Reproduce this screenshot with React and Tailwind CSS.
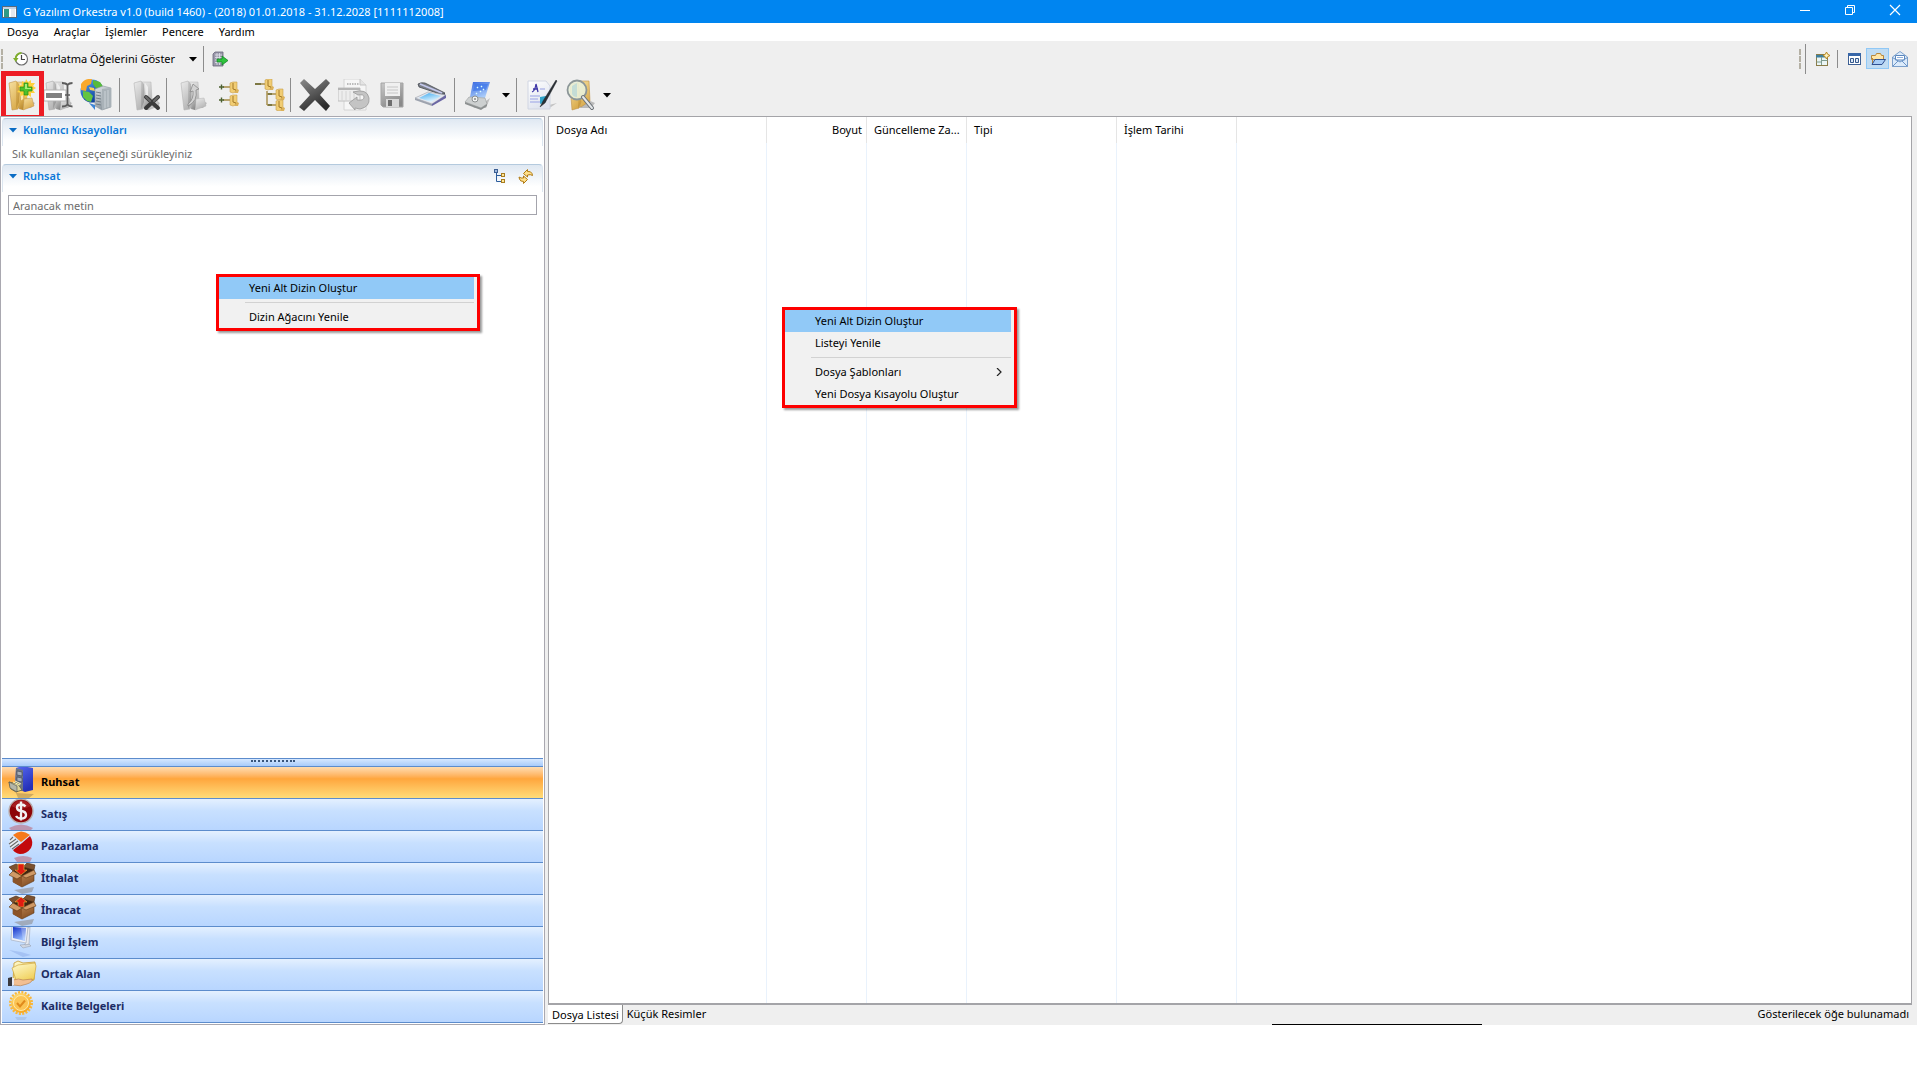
import React from "react";

/* ---------- shared gradients ---------- */
function Gradients() {
  const list = [
    ["gFolder", "#f7e0a0", "#d9ab4c"],
    ["gFolderDark", "#e3b95c", "#b98a30"],
    ["gGray", "#ececec", "#b4b4b4"],
    ["gGrayDark", "#c9c9c9", "#8a8a8a"],
    ["gX", "#8c8c8c", "#2c2c2c"],
    ["gBlue", "#5aa8f0", "#0c3f9c"],
    ["gBlueBox", "#5a6cf4", "#2430b8"],
    ["gServer", "#dfe4e8", "#8b959d"],
    ["gGlass", "#3fa9ee", "#e4f6ff"],
    ["gLaptop", "#3868e0", "#a9ccfa"],
    ["gYellow", "#fffbd0", "#f0cf58"],
    ["gSeal", "#ffe07a", "#f7a823"],
    ["gScreen", "#1430c8", "#9cc0ff"],
    ["gBox", "#d9a06a", "#8a5428"],
    ["gPaper", "#ffffff", "#dfe3ee"],
  ];
  return (
    <svg className="absolute size-0" aria-hidden="true">
      <defs>
        {list.map(([id, a, b]) => (
          <linearGradient key={id} id={id} x1="0" y1="0" x2="0.5" y2="1">
            <stop offset="0" stopColor={a} />
            <stop offset="1" stopColor={b} />
          </linearGradient>
        ))}
      </defs>
    </svg>
  );
}

const Svg = ({ s = 32, children, className = "size-8" }) => (
  <svg viewBox={`0 0 ${s} ${s}`} className={`${className} shrink-0`} fill="none" aria-hidden="true">
    {children}
  </svg>
);

const FolderShape = ({ light, dark, edge, flap = "#fff3c8" }) => (
  <>
    <path d="M22 21l6 3-4 5H10z" fill="#000" opacity=".22" />
    <path d="M10 3h9l1 18-8 7-4-3z" fill={light} stroke={edge} strokeWidth=".5" />
    <path d="M2 4l7-2 2 3 3 17-3 8-6 1z" fill={light} stroke={edge} strokeWidth=".6" />
    <path d="M9 2l3 3v18l-3 7z" fill={dark} opacity=".75" />
    <path d="M13 4l3 4v12l-2 2z" fill={flap} opacity=".8" />
    <path d="M17 20l8-1 2 8-11 4z" fill={light} stroke={edge} strokeWidth=".5" />
    <path d="M13 22l4-2-1 11-4-1z" fill={dark} />
  </>
);

/* ---------- main toolbar icons ---------- */
const NewFolderIcon = () => (
  <Svg>
    <FolderShape light="url(#gFolder)" dark="url(#gFolderDark)" edge="#c0924a" />
    <path d="M19 0l2 3 3-2 0 3 4 0-2 3 3 2-3 2 2 3-4 0 0 4-3-2-2 3-2-3-4 1 1-3-4-1 3-3-2-3 4-1 0-4 3 2z" fill="#ffd23c" />
    <path d="M17 4h4v4h4v4h-4v4h-4v-4h-4V8h4z" fill="#4fc02c" stroke="#2a8a14" strokeWidth=".7" />
    <path d="M18 5h2v4h4v1h-6z" fill="#a8ee7c" />
  </Svg>
);
const RenameIcon = () => (
  <Svg>
    <FolderShape light="url(#gGray)" dark="url(#gGrayDark)" edge="#a8a8a8" flap="#f4f4f4" />
    <rect x="0" y="11" width="22" height="11" fill="#fff" stroke="#b4b4b4" />
    <rect x="2" y="14" width="16" height="5" fill="#808080" />
    <path d="M18 4q4 0 5.500 2 1.500-2 5-2M23.500 6v20M18 27.500q4 0 5.500-2 1.500 2 5 2" stroke="#5c5c5c" strokeWidth="1.800" />
    <path d="M21 16h5" stroke="#5c5c5c" strokeWidth="1.500" />
  </Svg>
);
const GlobeServerIcon = () => (
  <Svg>
    <circle cx="12" cy="12" r="11.500" fill="url(#gBlue)" />
    <path d="M1 5Q5-1 12 0l-1 5-4 2-1 5-5-1z" fill="#f9a92c" />
    <path d="M13 1l7 2 4 6-5 2-4-3-2-3z" fill="#58bb3a" />
    <path d="M3 12l6 1 4 4-2 6-4-1-4-4z" fill="#63c442" />
    <path d="M9 8l5 1 1 3-5-1z" fill="#fbd154" />
    <path d="M15 10l8-3 8 2v19l-9 3-7-4z" fill="url(#gServer)" stroke="#8c979f" strokeWidth=".6" />
    <path d="M22 10l9-1v19l-9 3z" fill="#a9b2b8" />
    <path d="M16 13l5 1M16 16l5 1M16 19l5 1M16 22l5 1M16 25l5 1" stroke="#6b7880" strokeWidth=".9" />
    <path d="M25 12v17M28 11v17" stroke="#d4dbdf" strokeWidth=".8" />
    <path d="M9 24l6 2v5z" fill="#3d86d6" />
  </Svg>
);
const DeleteFolderIcon = () => (
  <Svg>
    <FolderShape light="url(#gGray)" dark="url(#gGrayDark)" edge="#b4b4b4" flap="#f4f4f4" />
    <path d="M14 18l12 11M26 18L14 29" stroke="#3a3a3a" strokeWidth="4" strokeLinecap="round" />
    <path d="M14 18l4 4M26 18l-4 4" stroke="#6a6a6a" strokeWidth="2" strokeLinecap="round" />
  </Svg>
);
const RestoreFolderIcon = () => (
  <Svg>
    <FolderShape light="url(#gGray)" dark="url(#gGrayDark)" edge="#b4b4b4" flap="#f4f4f4" />
    <path d="M9 27q10-5 8-16l3-1-6-5-3 8 3-1q1 8-5 13z" fill="#d2d2d2" stroke="#8a8a8a" strokeWidth=".8" />
  </Svg>
);
const MiniFolder = ({ x, y }) => (
  <g transform={`translate(${x} ${y})`}>
    <path d="M0 1l3-1h4v9l-4 2-3-1z" fill="#f1cd74" stroke="#c89d4a" strokeWidth=".6" />
    <path d="M3 1v6l3 1v2" stroke="#9a7120" strokeWidth=".9" />
    <path d="M7 7l2 1-1 3H4z" fill="#dcb25a" />
  </g>
);
const ExpandAllIcon = () => (
  <Svg>
    <path d="M4 8h7M4 21h7" stroke="#a58c48" strokeWidth="1.600" />
    <path d="M0 8h5M2.500 5.500v5M0 21h5M2.500 18.500v5" stroke="#4c6030" strokeWidth="1.400" />
    <MiniFolder x={11} y={3} />
    <MiniFolder x={11} y={16} />
  </Svg>
);
const CollapseTreeIcon = () => (
  <Svg>
    <path d="M1 5h10M13 12v14M13 15h9M13 26h9" stroke="#a58c48" strokeWidth="1.400" />
    <path d="M1 5h6M14 15h4M14 26h4" stroke="#6b6a34" strokeWidth="1.600" />
    <MiniFolder x={11} y={0} />
    <MiniFolder x={22} y={10} />
    <MiniFolder x={22} y={21} />
  </Svg>
);
const BigXIcon = () => (
  <Svg>
    <path d="M1 4l4-4 11 10L27 0l4 4-10 12 10 11-4 5-11-11L5 32l-5-4 11-12z" fill="url(#gX)" />
  </Svg>
);
const RevertDocIcon = () => (
  <Svg>
    <path d="M6 0h16l6 6v25H6z" fill="#f6f6f6" stroke="#d4d4d4" />
    <path d="M22 0v6h6" stroke="#c4c4c4" fill="#e4e4e4" />
    <path d="M9 5h12" stroke="#a8a8a8" strokeDasharray="1.500 1" strokeWidth="1.500" />
    <path d="M0 9h22v13H0z" fill="#ededed" stroke="#c0c0c0" />
    <path d="M0 9h22v2H0z" fill="#b4b4b4" />
    <path d="M4 12v10M8 12v10M12 12v10M16 12v10" stroke="#d4d4d4" />
    <path d="M15 13q14-4 16 6 1 9-9 11l-5-1v2l-6-7 8-6v3q7 1 7-3 0-3-6-2z" fill="#c4c4c4" stroke="#989898" strokeWidth=".8" />
  </Svg>
);
const SaveIcon = () => (
  <Svg>
    <path d="M5 4h22v24H7l-2-2z" fill="url(#gGrayDark)" stroke="#a4a4a4" />
    <path d="M9 4h15v13H9z" fill="#f0f0f0" />
    <path d="M11 8h11M11 11h11M11 14h11" stroke="#c6c6c6" />
    <path d="M10 20h13v8H10z" fill="#d8d8d8" />
    <path d="M12 21h4v6h-4z" fill="#6e6e6e" />
  </Svg>
);
const ScannerIcon = () => (
  <Svg>
    <path d="M3 5q3-2 7-1l20 10-2 2L4 8z" fill="#7c8088" stroke="#3a3e46" strokeWidth=".7" />
    <path d="M5 5l22 9" stroke="#c4c8ee" strokeWidth="1.600" />
    <path d="M26 15l4-1v4z" fill="#4a4e58" />
    <path d="M0 19l13-6 18 3-14 9z" fill="#e4e7ee" stroke="#9aa0aa" strokeWidth=".6" />
    <path d="M4 19l10-5 12 3-10 6z" fill="url(#gGlass)" />
    <path d="M0 19l17 6v2L0 21z" fill="#9da3ae" />
    <path d="M17 25l14-9v3l-14 8z" fill="#6a66a4" />
  </Svg>
);
const NotebookIcon = () => (
  <Svg>
    <path d="M23 22l4-3-4 10H10z" fill="#000" opacity=".2" />
    <path d="M10 3h17l-5 16-15-1z" fill="url(#gLaptop)" />
    <path d="M12 5h13l-2 6-13 1z" fill="#3f78ea" opacity=".7" />
    <path d="M14 8l1 1M18 7l1 1M17 12l1 1M20 10l1 1M13 14l1 1" stroke="#dff" strokeWidth="1.400" />
    <path d="M6 18l16 1 2 6-6 4-16-6z" fill="#cdd0d0" stroke="#989c9c" strokeWidth=".6" />
    <path d="M2 23l16 6 6-4v2l-6 4-16-6z" fill="#8c9090" />
    <circle cx="12" cy="20" r="3" fill="#f0f2f2" stroke="#8c9090" />
    <circle cx="12" cy="20" r="1" fill="#888" />
  </Svg>
);
const SignIcon = () => (
  <Svg>
    <path d="M18 27l12-3-9 6H9z" fill="#000" opacity=".18" />
    <path d="M1 2h18l4 5v23H1z" fill="url(#gPaper)" stroke="#d0d5e2" />
    <path d="M5 13q3-1 4-8l2 8M6 10h5" stroke="#4038a8" strokeWidth="1.300" />
    <path d="M13 10h5M3 17h10M3 20h8M3 23h10" stroke="#b4baea" strokeWidth="1.400" />
    <path d="M13 18l6-1v6l-6 2z" fill="#2fa2c8" />
    <path d="M29 1L16 22l-3 6 5-4L30 2z" fill="#2b3036" stroke="#14181c" strokeWidth=".4" />
  </Svg>
);
const FindFolderIcon = () => (
  <Svg>
    <path d="M22 21l7 3-4 5H12z" fill="#000" opacity=".22" />
    <path d="M12 2h11l1 20-9 6-4-3z" fill="url(#gFolder)" stroke="#c0924a" strokeWidth=".6" />
    <path d="M4 5l8-1 3 19-2 6-7 2z" fill="url(#gFolder)" stroke="#c0924a" strokeWidth=".6" />
    <path d="M12 18l3 4-3 8z" fill="url(#gFolderDark)" />
    <circle cx="11" cy="11" r="9.500" fill="#e9f1dc" fillOpacity=".88" stroke="#8c9698" strokeWidth="1.800" />
    <path d="M11 4v14q-4 0-5-3V7z" fill="#b4d6d8" opacity=".7" />
    <path d="M17 18l9 11" stroke="#6a7076" strokeWidth="4" strokeLinecap="round" />
    <path d="M17 18l9 11" stroke="#e4e7e9" strokeWidth="2" strokeLinecap="round" />
  </Svg>
);

/* ---------- small icons ---------- */
const AppIcon = () => (
  <Svg s={16} className="size-4">
    <rect x=".5" y="2.500" width="14" height="11" fill="#fff" stroke="#5a6a7c" />
    <path d="M1 3h13v2H1z" fill="#c4d2e2" />
    <rect x="2" y="5" width="5" height="8" fill="#2f9a86" />
    <rect x="9" y="5" width="4" height="8" fill="#e4e8ee" />
  </Svg>
);
const ClockIcon = () => (
  <Svg s={16} className="size-4">
    <circle cx="8.500" cy="8" r="6" fill="#fff" stroke="#6a6a6a" strokeWidth="1.100" />
    <path d="M8.500 4v4.500H12" stroke="#444" strokeWidth="1.200" />
    <path d="M8.500 2A6 6 0 002.500 8" stroke="#7fae2c" strokeWidth="1.800" />
    <path d="M0 7h5.500L2.800 11z" fill="#7fae2c" />
  </Svg>
);
const ExitIcon = () => (
  <Svg s={16} className="size-4">
    <path d="M3 1h8v14H1V3z" fill="#9a98aa" stroke="#68667a" strokeWidth=".8" />
    <path d="M3 4h7M3 6.500h7M3 9h5M3 11.500h7M5 2v12M7.500 2v12" stroke="#e2e2ec" strokeWidth=".8" />
    <path d="M5 8h5V5l6 4.500-6 4.500v-3H5z" fill="#2fc43c" stroke="#14842a" strokeWidth=".8" />
  </Svg>
);
const OpenPerspectiveIcon = () => (
  <Svg s={16} className="size-4">
    <rect x="1.500" y="3.500" width="11" height="11" fill="#eaf5f4" stroke="#8a7c48" />
    <path d="M1 4h9v2.500H1z" fill="#3f7f9c" />
    <path d="M6.500 6v8M6.500 9.500h6M1.500 11H6" stroke="#7f9c90" />
    <path d="M11.500 1l1.200 2.300L15 4.500l-2.300 1.200-1.200 2.300-1.200-2.300L8 4.500l2.300-1.200z" fill="#fff3c0" stroke="#b98820" />
  </Svg>
);
const FormIcon = () => (
  <Svg s={16} className="size-4">
    <rect x="1.500" y="2.500" width="12" height="11" fill="#fff" stroke="#3c5f94" />
    <path d="M1 2h13v3H1z" fill="#3766a8" />
    <path d="M3.500 7.500h3v4h-3zM8.500 7.500h3v4h-3z" stroke="#34588c" fill="#dce8f6" />
  </Svg>
);
const OpenFolderIcon = () => (
  <Svg s={16} className="size-4">
    <path d="M1.500 4.500h4l1-2h4l1 2h2v4h-12z" fill="#ffe6a8" stroke="#b8873c" />
    <path d="M2.500 13.500V7" stroke="#b8873c" />
    <path d="M5 8.500h10.500l-3.500 5H2z" fill="#a8cdf6" stroke="#2f4f90" />
  </Svg>
);
const MailIcon = () => (
  <Svg s={16} className="size-4">
    <path d="M.5 6L8 .5 15.500 6v9.500H.5z" fill="#dcebfb" stroke="#7ca0cc" />
    <path d="M3.500 4.500h9V9h-9z" fill="#fff" stroke="#5b86bc" />
    <path d="M5 6.500h6" stroke="#8fb0dc" />
    <path d="M.5 6.500L8 11l7.500-4.500M.5 15.500L6 10M15.500 15.500L10 10" stroke="#6c94c6" />
  </Svg>
);
const TreeIcon = () => (
  <Svg s={16} className="size-4">
    <path d="M3.500 5v8.500H8M3.500 7.500H8" stroke="#2c5c9c" />
    <rect x="1.500" y="1.500" width="3" height="3" fill="#9fb8dc" stroke="#3c5f94" />
    <rect x="8.500" y="5.500" width="3" height="3" fill="#ffe696" stroke="#a87c20" />
    <rect x="8.500" y="11.500" width="3" height="3" fill="#ffe696" stroke="#a87c20" />
  </Svg>
);
const SyncIcon = () => (
  <Svg s={16} className="size-4">
    <path d="M5.500 5.500L9.500 1.500v2q3.500-.5 4.500 2l.5 2q-2-1.500-5-.5v2z" fill="#ffe08a" stroke="#b07a14" />
    <path d="M9.500 11.500l-4 4v-2Q2 13.500 1.500 11L1 9q2 1.500 4.500 1V8z" fill="#ffe08a" stroke="#b07a14" />
  </Svg>
);
const Caret = ({ className = "text-black" }) => (
  <Svg s={8} className={`h-2 w-2 ${className}`}>
    <path d="M0 2h8L4 6.500z" fill="currentColor" />
  </Svg>
);

/* ---------- navigation icons ---------- */
const CabinetIcon = () => (
  <Svg>
    <path d="M8 27l18 1-5 4H10z" fill="#8c6c40" opacity=".4" />
    <path d="M8 2l6-2 11 2v22l-8 2-10-4z" fill="url(#gBlueBox)" />
    <path d="M8 2l7 2v21l-8-4z" fill="#6c7484" />
    <path d="M9 5l5 1v4l-5-1zM9 11l5 1v4l-5-1z" fill="#a6adb8" stroke="#3c4454" strokeWidth=".6" />
    <path d="M1 16l9 2 4 6-6 2-5-3z" fill="#dcd49a" stroke="#5c5c44" strokeWidth=".8" />
    <path d="M1 16l8 4v6l-7-4z" fill="#b4b6a8" stroke="#4c4c44" strokeWidth=".6" />
    <path d="M5 16l7 3M7 15l6 3" stroke="#fff6b0" />
  </Svg>
);
const DollarIcon = () => (
  <Svg>
    <path d="M1 30q12-7 24 0l-2 2H3z" fill="#c02020" opacity=".35" />
    <circle cx="13" cy="13" r="12" fill="#8e0508" stroke="#b9b0b0" strokeWidth="1.400" />
    <path d="M3 8Q13-4 23 8q-10 5-20 0z" fill="#d04a4a" opacity=".35" />
    <path d="M17.500 8.500q-1.500-2-4.500-2-4 0-4 3t4 3.500q5 .5 5 4t-5 3.500q-3.500 0-5-2.500M13 3.500v19" stroke="#f2f2f2" strokeWidth="2.400" />
  </Svg>
);
const PieIcon = () => (
  <Svg>
    <path d="M6 28q9-4 18 0l-2 4H9z" fill="#c02020" opacity=".35" />
    <path d="M13 12L5 5q8-7 17 0z" fill="#f67a1c" />
    <path d="M14 13l8-7q4 6 1 12-4 6-11 6-5-1-7-4z" fill="#c3090c" />
    <path d="M4 6l8 7-8 6q-5-7 0-13z" fill="#eaeef4" />
    <path d="M2 10l3-3M1 14l7-5M2 17l8-6M4 19l7-5" stroke="#6c6c6c" strokeWidth="1.100" />
  </Svg>
);
const BoxIcon = ({ up }) => (
  <Svg>
    <path d="M6 28l20-3-2 5-10 2z" fill="#7a6a58" opacity=".4" />
    <path d="M5 9l10-4 11 3v11l-12 6-9-5z" fill="url(#gBox)" stroke="#5c3716" strokeWidth=".6" />
    <path d="M5 10l9 4v11l-9-5z" fill="#8c5428" />
    <path d="M5 9l10-5 11 4-12 6z" fill="#3f2410" />
    <path d="M5 9L1 5l7-3 7 3zM26 8l1-5-8-2-4 4z" fill="#7c5230" stroke="#4c2c10" strokeWidth=".6" />
    {up ? (
      <path d="M13 3l6 5h-3v5h-6V8H7z" fill="#e01c12" stroke="#f0c040" strokeWidth=".6" />
    ) : (
      <path d="M13 13L7 8h3V2h6v6h3z" fill="#e01c12" stroke="#f0c040" strokeWidth=".6" />
    )}
    <path d="M5 9l-4 4 8 4 5-3zM26 8l2 4-10 4-4-2z" fill="#d09a66" stroke="#5c3716" strokeWidth=".6" />
  </Svg>
);
const ComputerIcon = () => (
  <Svg>
    <path d="M1 24l12 2 10 3-8 2z" fill="#7c9ce0" opacity=".35" />
    <path d="M12 19l9-1 2 2-8 2z" fill="#cfd6e2" stroke="#9098a8" strokeWidth=".5" />
    <path d="M20 1h2l-1 17-4 1z" fill="#e6e9f0" stroke="#9098a8" strokeWidth=".5" />
    <path d="M4 0l16 1-2 16-15-3z" fill="#eef1f8" stroke="#a0a8b8" strokeWidth=".6" />
    <path d="M5 1l13 1-1 13-12-3z" fill="url(#gScreen)" />
    <path d="M13 2h5l-1 13-2-1z" fill="#fff" opacity=".25" />
  </Svg>
);
const SharedFolderIcon = () => (
  <Svg>
    <path d="M6 5l4-2 5 2 12-1-1 18-18 4-3-3z" fill="url(#gYellow)" stroke="#c89a30" strokeWidth=".8" />
    <path d="M4 10l6-3 17-2 1 3-2 13-17 4z" fill="url(#gYellow)" stroke="#d0a840" strokeWidth=".7" />
    <path d="M5 22q6-2 10 0l9-1q1 3-5 5-6 3-14 1z" fill="#f2bf92" stroke="#b07844" strokeWidth=".6" />
    <path d="M0 20l4-1v9H0z" fill="#3a3a40" />
    <path d="M4 20h2v7H4z" fill="#e8e8f0" />
  </Svg>
);
const SealIcon = () => (
  <Svg>
    <path d="M7 27h12l-2 3H9z" fill="#90a8c8" opacity=".35" />
    <circle cx="13" cy="13" r="10.500" stroke="#f9b73a" strokeWidth="3" strokeDasharray="2 1.300" />
    <circle cx="13" cy="13" r="10" fill="url(#gSeal)" />
    <circle cx="13" cy="13" r="7.500" fill="#fbc454" stroke="#ffe9a8" />
    <path d="M9 13l3 3.500 5-6" stroke="#e08a1c" strokeWidth="2" />
  </Svg>
);

/* ---------- toolbar parts ---------- */
const ToolButton = ({ label, children, className = "" }) => (
  <button type="button" aria-label={label} title={label} className={`flex items-center gap-[3px] ${className}`}>
    {children}
  </button>
);
const Divider = ({ className = "h-8" }) => <span className={`w-px shrink-0 bg-[#8c8c8c] ${className}`} />;
const Gripper = ({ className = "" }) => (
  <span className={`w-0.5 border-l-2 border-dashed border-[#b4b0a4] ${className}`} />
);

function TitleBar() {
  return (
    <header className="flex h-[23px] items-center bg-[#0085f0] pl-0.5 text-white">
      <AppIcon />
      <h1 className="ml-[5px] text-[11px]">G Yazılım Orkestra v1.0 (build 1460) - (2018) 01.01.2018 - 31.12.2028 [1111112008]</h1>
      <div className="ml-auto flex h-full pb-1">
        <button type="button" aria-label="Simge durumuna küçült" className="flex w-[45px] items-center justify-center">
          <Svg s={12} className="size-3"><path d="M1 6.500h10" stroke="#fff" /></Svg>
        </button>
        <button type="button" aria-label="Önceki boyut" className="flex w-[45px] items-center justify-center">
          <Svg s={12} className="size-3"><path d="M1.500 3.500h7v7h-7zM3.500 3V1.500h7v7H9" stroke="#fff" /></Svg>
        </button>
        <button type="button" aria-label="Kapat" className="flex w-[45px] items-center justify-center">
          <Svg s={12} className="size-3"><path d="M1 1l10 10M11 1L1 11" stroke="#fff" strokeWidth="1.200" /></Svg>
        </button>
      </div>
    </header>
  );
}

function MenuBar() {
  return (
    <nav className="flex h-[18px] items-center gap-[15px] bg-white pl-[7px]">
      {["Dosya", "Araçlar", "İşlemler", "Pencere", "Yardım"].map((m) => (
        <button key={m} type="button">{m}</button>
      ))}
    </nav>
  );
}

function ReminderBar() {
  return (
    <div className="flex h-[35px] items-center">
      <Gripper className="ml-px h-5" />
      <ToolButton label="Hatırlatma Öğelerini Göster" className="ml-2.5">
        <ClockIcon />
        <span>Hatırlatma Öğelerini Göster</span>
      </ToolButton>
      <ToolButton label="Hatırlatma seçenekleri" className="ml-3.5"><Caret /></ToolButton>
      <Divider className="ml-1.5 h-[26px]" />
      <ToolButton label="Çıkış" className="ml-2"><ExitIcon /></ToolButton>
      <div className="ml-auto flex items-center pr-[9px]">
        <Gripper className="h-5" />
        <Divider className="ml-1 h-[30px]" />
        <ToolButton label="Perspektif aç" className="ml-[9px]"><OpenPerspectiveIcon /></ToolButton>
        <Divider className="ml-1.5 h-[18px]" />
        <ToolButton label="Formlar" className="ml-[9px]"><FormIcon /></ToolButton>
        <ToolButton label="Dosyalar" className="ml-[3px] h-[21px] w-[23px] justify-center border border-[#90c8f6] bg-[#c0dcf3]">
          <OpenFolderIcon />
        </ToolButton>
        <ToolButton label="Posta" className="ml-[3px]"><MailIcon /></ToolButton>
      </div>
    </div>
  );
}

function MainToolbar() {
  return (
    <div className="flex h-10 items-center pb-0.5 pl-px">
      <ToolButton label="Yeni klasör" className="-my-2 h-[49px] w-[43px] justify-center border-[5px] border-[#ed1c24]">
        <NewFolderIcon />
      </ToolButton>
      <ToolButton label="Yeniden adlandır"><RenameIcon /></ToolButton>
      <ToolButton label="Sunucu" className="ml-1"><GlobeServerIcon /></ToolButton>
      <Divider className="ml-[7px] h-[34px]" />
      <ToolButton label="Klasörü sil" className="ml-3"><DeleteFolderIcon /></ToolButton>
      <Divider className="ml-0.5 h-[34px]" />
      <ToolButton label="Geri al" className="ml-3"><RestoreFolderIcon /></ToolButton>
      <ToolButton label="Tümünü genişlet" className="ml-2"><ExpandAllIcon /></ToolButton>
      <ToolButton label="Tümünü daralt" className="ml-[3px]"><CollapseTreeIcon /></ToolButton>
      <Divider className="ml-1 h-[34px]" />
      <ToolButton label="Sil" className="ml-2"><BigXIcon /></ToolButton>
      <ToolButton label="Belgeyi geri al" className="ml-[7px]"><RevertDocIcon /></ToolButton>
      <ToolButton label="Kaydet" className="ml-[6px]"><SaveIcon /></ToolButton>
      <ToolButton label="Tara" className="ml-[7px]"><ScannerIcon /></ToolButton>
      <Divider className="ml-[7px] h-[34px]" />
      <ToolButton label="Aygıt" className="ml-2"><NotebookIcon /></ToolButton>
      <ToolButton label="Aygıt seçenekleri" className="ml-[7px]"><Caret /></ToolButton>
      <Divider className="ml-1.5 h-[34px]" />
      <ToolButton label="İmzala" className="ml-2.5"><SignIcon /></ToolButton>
      <ToolButton label="Klasörde ara" className="ml-[7px]"><FindFolderIcon /></ToolButton>
      <ToolButton label="Arama seçenekleri" className="ml-[5px]"><Caret /></ToolButton>
    </div>
  );
}

/* ---------- left panel ---------- */
function SectionHeader({ title, children }) {
  return (
    <div className="flex h-7 items-start rounded-t-sm border-x border-t border-x-[#dce6f0] border-t-[#b4cade] bg-linear-to-b from-[#dfe8f2] to-white to-80% pl-1.5 pr-2 pt-[3px]">
      <button type="button" className="flex items-center gap-1.5 font-semibold text-[#0a78d8]">
        <Caret className="text-[#0a6cc4]" />
        {title}
      </button>
      {children}
    </div>
  );
}

const NAV = [
  ["Ruhsat", <CabinetIcon />],
  ["Satış", <DollarIcon />],
  ["Pazarlama", <PieIcon />],
  ["İthalat", <BoxIcon />],
  ["İhracat", <BoxIcon up />],
  ["Bilgi İşlem", <ComputerIcon />],
  ["Ortak Alan", <SharedFolderIcon />],
  ["Kalite Belgeleri", <SealIcon />],
];

function Sidebar() {
  return (
    <aside className="flex w-[545px] shrink-0 flex-col border border-[#a9a8b0] bg-white p-px">
      <SectionHeader title="Kullanıcı Kısayolları" />
      <p className="h-[18px] pl-2.5 leading-4 text-[#6c6c6c]">Sık kullanılan seçeneği sürükleyiniz</p>
      <SectionHeader title="Ruhsat">
        <span className="ml-auto flex gap-[9px]">
          <button type="button" aria-label="Ağaç görünümü"><TreeIcon /></button>
          <button type="button" aria-label="Yenile"><SyncIcon /></button>
        </span>
      </SectionHeader>
      <input
        type="text"
        aria-label="Aranacak metin"
        placeholder="Aranacak metin"
        className="mx-1.5 mt-[3px] h-5 border border-[#a4a4ac] px-1 outline-none placeholder:text-[#6c6c6c]"
      />
      <div className="relative flex-1">
        <ContextMenu
          className="left-[214px] top-[59px] w-[264px]"
          items={[["Yeni Alt Dizin Oluştur"], null, ["Dizin Ağacını Yenile"]]}
        />
      </div>
      <div className="flex h-2 items-start justify-center border-t border-[#5c8ccc] bg-linear-to-b from-[#d6e8ff] to-[#a8cbfb] pt-px">
        <span className="w-11 border-t-2 border-dotted border-[#38557c]" />
      </div>
      <nav className="border-b border-[#5c8ccc]">
        {NAV.map(([label, icon], i) => (
          <button
            key={label}
            type="button"
            className={`flex h-8 w-full items-center gap-px overflow-hidden border-t border-[#5c8ccc] bg-linear-to-b pb-0.5 pl-1.5 font-bold ${
              i === 0
                ? "from-[#ffdcb0] from-0% via-[#ffa63c] via-38% to-[#ffdc78] text-black"
                : "from-[#e4f0ff] from-0% via-[#c8e0ff] via-38% to-[#b8d6ff] text-[#1c2c64]"
            }`}
          >
            {icon}
            <span>{label}</span>
          </button>
        ))}
      </nav>
    </aside>
  );
}

/* ---------- context menus ---------- */
function ContextMenu({ className, items }) {
  return (
    <div
      role="menu"
      className={`absolute border-[3px] border-[#fe0000] bg-[#f1f1f1] pr-[3px] shadow-[2px_2px_2px_rgba(0,0,0,0.4)] ${className}`}
    >
      {items.map((it, i) =>
        it ? (
          <button
            key={i}
            type="button"
            role="menuitem"
            className={`flex h-[22px] w-full items-center justify-between pl-[30px] pr-2 text-left ${
              i === 0 ? "bg-[#91c9f7]" : ""
            }`}
          >
            {it[0]}
            {it[1] && <Svg s={8} className="size-2"><path d="M2 0l4 4-4 4" stroke="#222" strokeWidth="1.200" /></Svg>}
          </button>
        ) : (
          <div key={i} role="separator" className="my-[3px] ml-[26px] h-px bg-[#d2d2d2]" />
        )
      )}
    </div>
  );
}

/* ---------- file list ---------- */
const COLS = ["Dosya Adı", "Boyut", "Güncelleme Za...", "Tipi", "İşlem Tarihi", ""];

function FileList() {
  return (
    <main className="flex min-w-0 flex-1 flex-col">
      <div className="relative flex-1 border border-b-2 border-[#a4a4a8] bg-white">
        <table className="h-full w-full table-fixed border-separate border-spacing-0">
          <colgroup>
            <col className="w-[218px]" />
            <col className="w-[100px]" />
            <col className="w-[100px]" />
            <col className="w-[150px]" />
            <col className="w-[120px]" />
            <col />
          </colgroup>
          <thead>
            <tr className="h-[26px]">
              {COLS.map((c, i) => (
                <th
                  key={i}
                  scope="col"
                  className={`whitespace-nowrap border-r border-[#e5e5e5] p-0 pl-[7px] pr-1 font-normal last:border-r-0 ${
                    i === 1 ? "text-right" : "text-left"
                  }`}
                >
                  {c}
                </th>
              ))}
            </tr>
          </thead>
          <tbody>
            <tr>
              {COLS.map((c, i) => (
                <td key={i} className="border-r border-[#e9f2fc] last:border-r-0" />
              ))}
            </tr>
          </tbody>
        </table>
        <ContextMenu
          className="left-[233px] top-[190px] w-[235px]"
          items={[["Yeni Alt Dizin Oluştur"], ["Listeyi Yenile"], null, ["Dosya Şablonları", true], ["Yeni Dosya Kısayolu Oluştur"]]}
        />
      </div>
      <div className="flex h-5 items-start leading-[17px]">
        <button type="button" className="h-[19px] rounded-br-sm border-b border-r border-[#8c8c8c] bg-white pl-1 pr-[3px]">
          Dosya Listesi
        </button>
        <button type="button" className="px-1">Küçük Resimler</button>
        <span className="ml-auto pr-[3px]">Gösterilecek öğe bulunamadı</span>
      </div>
    </main>
  );
}

export default function App() {
  return (
    <div className="flex h-screen flex-col bg-white pb-[55px] font-['Noto_Sans',sans-serif] text-[11px] leading-4 text-black">
      <Gradients />
      <TitleBar />
      <MenuBar />
      <div className="flex min-h-0 flex-1 flex-col bg-[#efefef]">
        <ReminderBar />
        <MainToolbar />
        <div className="flex min-h-0 flex-1 gap-[3px] pr-[5px]">
          <Sidebar />
          <FileList />
        </div>
        <div className="-mt-px ml-[1272px] h-px w-[210px] bg-black" />
      </div>
    </div>
  );
}
